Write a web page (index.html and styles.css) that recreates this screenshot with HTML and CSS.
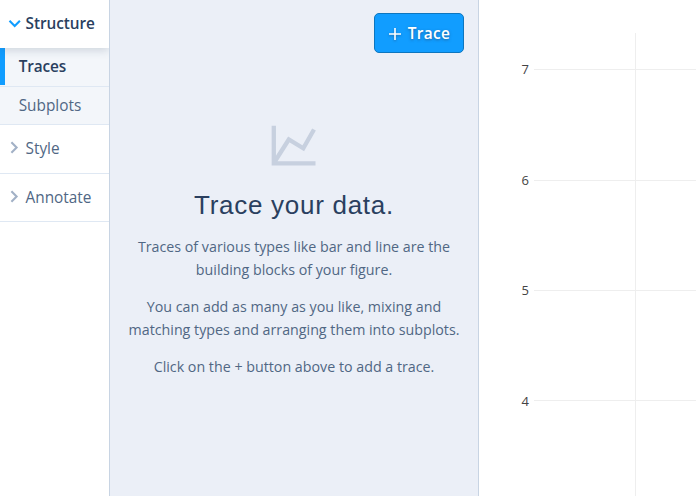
FILE: index.html
```html
<!DOCTYPE html>
<html lang="en">
<head>
<meta charset="utf-8">
<title>Chart editor</title>
<link rel="stylesheet" href="styles.css">
</head>
<body>
<div class="editor">
  <nav class="sidebar">
    <div class="group group--open">
      <svg class="chevron" width="12" height="12" viewBox="0 0 12 12"><path d="M1.5 3.7L6.7 8.9L11.9 3.7"/></svg>
      <span>Structure</span>
    </div>
    <div class="item item--active">Traces</div>
    <div class="item">Subplots</div>
    <div class="group">
      <svg class="chevron" width="12" height="12" viewBox="0 0 12 12"><path d="M3.4 .3L8.6 5.5L3.4 10.7"/></svg>
      <span>Style</span>
    </div>
    <div class="group group--last">
      <svg class="chevron" width="12" height="12" viewBox="0 0 12 12"><path d="M3.4 .3L8.6 5.5L3.4 10.7"/></svg>
      <span>Annotate</span>
    </div>
  </nav>
  <main class="panel">
    <div class="actions">
      <button class="add">
        <svg width="14" height="14" viewBox="0 0 14 14"><path d="M7 1V13M1 7H13"/></svg>
        <span>Trace</span>
      </button>
    </div>
    <section class="empty">
      <svg class="empty-icon" width="46" height="42" viewBox="0 0 46 42"><path d="M2.8 .8V38.3H44.5M3.5 37L17.8 14.5L32.3 23.3L43 4.5"/></svg>
      <h1>Trace your data.</h1>
      <p>Traces of various types like bar and line are the building blocks of your figure.</p>
      <p>You can add as many as you like, mixing and matching types and arranging them into subplots.</p>
      <p>Click on the + button above to add a trace.</p>
    </section>
  </main>
  <svg class="plot" width="217" height="496" viewBox="0 0 217 496">
    <path class="grid" d="M156.5 33V496M55 69.5H217M55 180.5H217M55 290.5H217M55 400.5H217"/>
    <g class="ticks">
      <text x="50" y="74">7</text>
      <text x="50" y="185">6</text>
      <text x="50" y="295">5</text>
      <text x="50" y="406">4</text>
    </g>
  </svg>
</div>
</body>
</html>
```
FILE: styles.css
```css
* { box-sizing: border-box; }
body {
  margin: 0;
  overflow: hidden;
  background: #fff;
  color: #506784;
  font-family: "Open Sans", sans-serif;
}
.editor { display: flex; height: 496px; }
.sidebar {
  width: 110px;
  flex: none;
  border-right: 1px solid #c8d4e3;
  font-size: 15.36px;
}
.group {
  display: flex;
  align-items: center;
  gap: 5px;
  height: 49px;
  padding: 0 0 2px 8px;
  border-bottom: 1px solid #dfe8f3;
}
.group span { padding-left: 0.5px; }
.group--last { height: 48px; padding-bottom: 1px; }
.group--open {
  position: relative;
  height: 48px;
  padding-bottom: 1px;
  border-bottom-color: #fff;
  background: #fff;
  color: #2a3f5f;
  font-weight: 600;
  letter-spacing: -0.06px;
  box-shadow: 0 2px 9px rgba(42, 63, 95, 0.2);
  clip-path: inset(0 0 -12px 0);
}
.chevron { overflow: visible; fill: none; stroke: #a2b1c6; stroke-width: 2.1; }
.group--open .chevron { stroke: #119dff; }
.item {
  height: 38px;
  padding-left: 18.7px;
  background: #f3f6fa;
  border-bottom: 1px solid #dfe8f3;
  line-height: 37px;
}
.item--active {
  height: 39px;
  background: linear-gradient(#119dff, #119dff) 0 0 / 5px 37px no-repeat #f3f6fa;
  color: #2a3f5f;
  font-weight: 600;
  letter-spacing: -0.12px;
}
.panel {
  width: 369px;
  flex: none;
  background: #ebeff7;
  border-right: 1px solid #c8d4e3;
}
.actions { display: flex; justify-content: flex-end; padding: 13px 14px 0 0; }
.add {
  display: flex;
  align-items: center;
  justify-content: center;
  gap: 6px;
  width: 90px;
  height: 40px;
  padding: 1px 0 0;
  border: 1px solid #0d76bf;
  border-radius: 5px;
  background: #119dff;
  color: #fff;
  font: 600 15.36px/18px "Open Sans", sans-serif;
  letter-spacing: 0.32px;
  text-shadow: 0 1px 3px rgba(42, 63, 95, 0.6);
}
.add svg {
  fill: none;
  stroke: #fff;
  stroke-width: 1.6;
  filter: drop-shadow(0 1px 1px rgba(42, 63, 95, 0.5));
}
.empty { padding: 72px 14px 0; text-align: center; }
.empty-icon { display: block; margin: 0 auto; fill: none; stroke: #c7d0df; stroke-width: 4.3; }
h1 {
  margin: 22px 0 14px;
  color: #2a3f5f;
  font: 400 26px/32px "Liberation Sans", sans-serif;
  letter-spacing: 0.72px;
}
p { margin: 0 0 14px; font-size: 14.26px; line-height: 23px; }
.plot { display: block; flex: none; }
.grid { fill: none; stroke: #eee; stroke-width: 1; }
.ticks { fill: #444; font-size: 13px; text-anchor: end; }
```
